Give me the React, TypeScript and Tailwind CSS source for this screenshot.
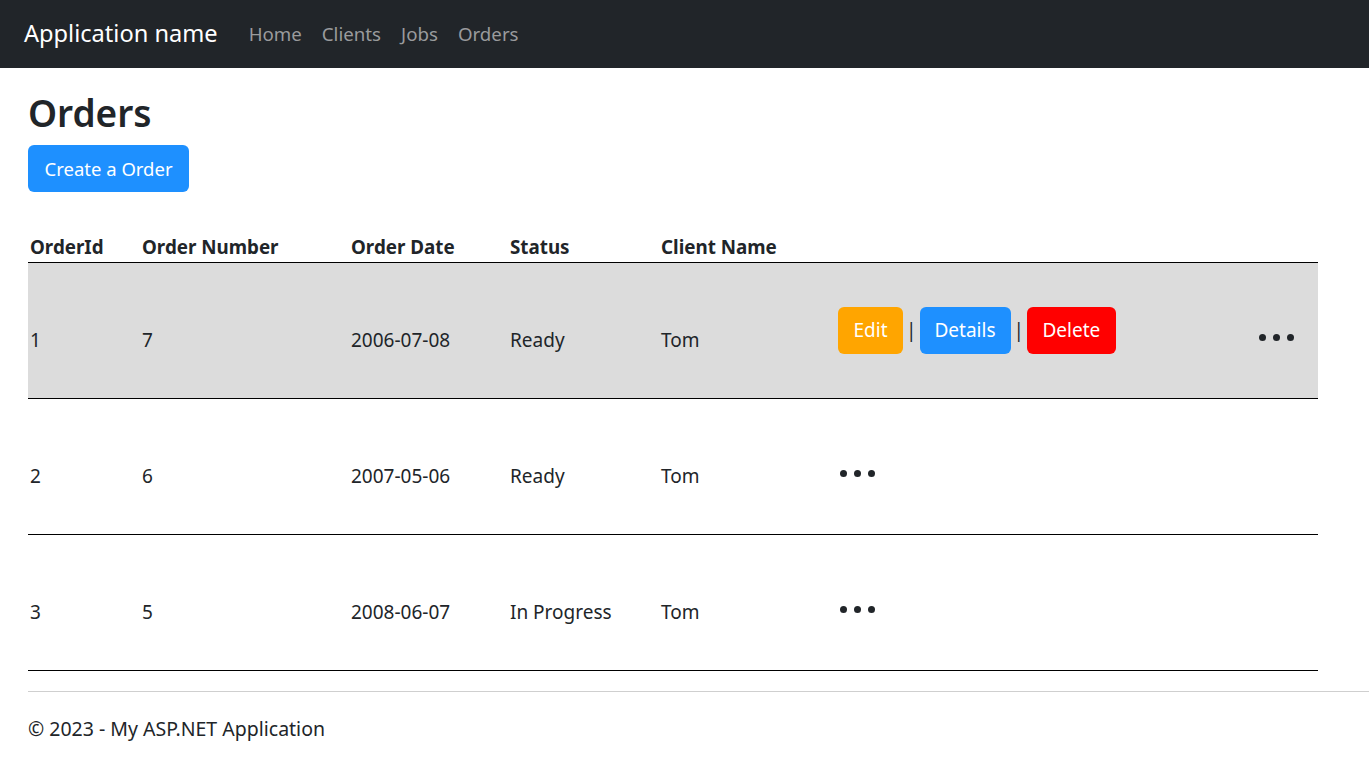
import React from "react";

type Order = {
  id: number;
  number: number;
  date: string;
  status: string;
  client: string;
  active?: boolean;
};

const orders: Order[] = [
  { id: 1, number: 7, date: "2006-07-08", status: "Ready", client: "Tom", active: true },
  { id: 2, number: 6, date: "2007-05-06", status: "Ready", client: "Tom" },
  { id: 3, number: 5, date: "2008-06-07", status: "In Progress", client: "Tom" },
];

const font = { fontFamily: '"Noto Sans", "Open Sans", Arial, sans-serif' };

const Dots = () => (
  <div className="flex gap-[7px]">
    <span className="h-[7px] w-[7px] rounded-full bg-[#212529]"></span>
    <span className="h-[7px] w-[7px] rounded-full bg-[#212529]"></span>
    <span className="h-[7px] w-[7px] rounded-full bg-[#212529]"></span>
  </div>
);

const App = () => {
  return (
    <div className="min-h-screen bg-white text-[#212529]" style={font}>
      <nav className="flex h-[68px] items-center bg-[#212529] pl-[24px]">
        <a className="text-[23.6px] leading-none text-white">Application name</a>
        <div className="ml-[21px] flex text-[18.7px] text-[#9a9b9d]">
          <a className="px-[10px]">Home</a>
          <a className="px-[10px]">Clients</a>
          <a className="px-[10px]">Jobs</a>
          <a className="px-[10px]">Orders</a>
        </div>
      </nav>

      <main className="px-[28px]">
        <h2 className="mt-[22px] text-[37px] font-semibold leading-[46px]">Orders</h2>
        <button className="mt-[9px] h-[47px] rounded-[6px] bg-[#1e90ff] px-[16.5px] text-[18.5px] text-white">
          Create a Order
        </button>

        <div className="mt-[27px] w-[1290px] text-[19px]">
          <div className="flex h-[44px] border-b border-black pt-[14px] text-[18.8px] font-bold leading-[29px]">
            <div className="w-[114px] pl-[2px]">OrderId</div>
            <div className="w-[209px]">Order Number</div>
            <div className="w-[159px]">Order Date</div>
            <div className="w-[151px]">Status</div>
            <div className="w-[177px]">Client Name</div>
            <div className="flex-1"></div>
          </div>

          {orders.map((o) => (
            <div
              key={o.id}
              className={`flex h-[136px] border-b border-black leading-[29px] ${
                o.active ? "bg-[#dcdcdc]" : ""
              }`}
            >
              <div className="w-[114px] pl-[2px] pt-[63px]">{o.id}</div>
              <div className="w-[209px] pt-[63px]">{o.number}</div>
              <div className="w-[159px] pt-[63px]">{o.date}</div>
              <div className="w-[151px] pt-[63px]">{o.status}</div>
              <div className="w-[177px] pt-[63px]">{o.client}</div>
              {o.active ? (
                <div className="flex flex-1 items-start justify-between pr-[24px] pt-[44px]">
                  <div className="flex items-center gap-[3px]">
                    <button className="h-[47px] rounded-[6px] bg-[#ffa500] px-[15.5px] text-white">Edit</button>
                    <span>|</span>
                    <button className="h-[47px] rounded-[6px] bg-[#1e90ff] px-[15px] text-white">Details</button>
                    <span>|</span>
                    <button className="h-[47px] rounded-[6px] bg-[#ff0000] px-[15.5px] text-white">Delete</button>
                  </div>
                  <div className="mt-[27px]">
                    <Dots />
                  </div>
                </div>
              ) : (
                <div className="flex-1 pl-[2px] pt-[71px]">
                  <Dots />
                </div>
              )}
            </div>
          ))}
        </div>
      </main>

      <footer className="mt-[20px] ml-[28px] border-t border-[#cfcfcf] pt-[22px]">
        <p className="text-[19.5px] leading-[29px]">© 2023 - My ASP.NET Application</p>
      </footer>
    </div>
  );
};

export default App;
